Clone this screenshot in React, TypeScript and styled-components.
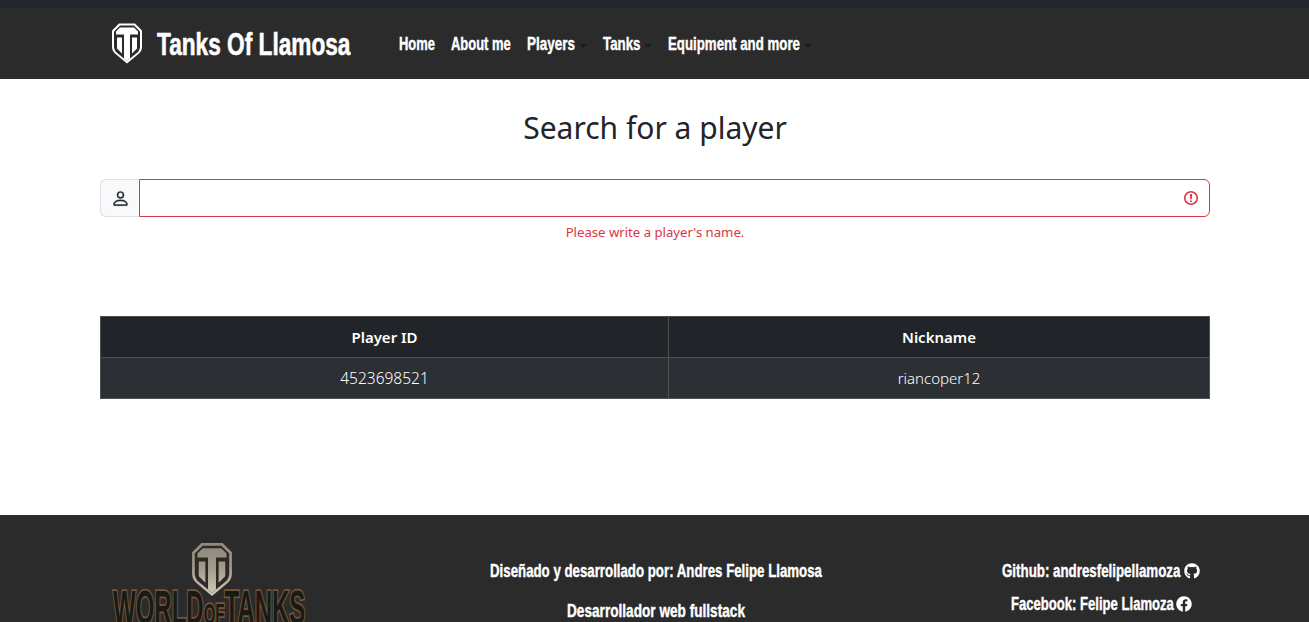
import type { ReactNode } from "react";
import { FaFacebook, FaGithub } from "react-icons/fa";
import { BsPerson } from "react-icons/bs";
import styled, { createGlobalStyle } from "styled-components";

const GlobalStyle = createGlobalStyle`
  html, body {
    margin: 0;
    padding: 0;
    background: #fff;
    overflow: hidden;
  }
  * {
    box-sizing: border-box;
  }
`;

const Page = styled.div`
  height: 100vh;
  overflow: hidden;
  font-family: "Noto Sans", "Open Sans", sans-serif;
  color: #212529;
`;

// the condensed display face isn't installed, so squeeze Liberation Sans Bold
const NarrowBox = styled.span<{ $w: number }>`
  display: inline-block;
  flex: none;
  width: ${(p) => p.$w}px;
  font-family: "Liberation Sans", Arial, sans-serif;
  font-weight: 700;
  white-space: nowrap;
`;

const NarrowText = styled.span<{ $s: number }>`
  display: inline-block;
  transform-origin: left center;
  transform: scaleX(${(p) => p.$s});
`;

function Narrow({ w, s = 0.72, children }: { w: number; s?: number; children: ReactNode }) {
  return (
    <NarrowBox $w={w}>
      <NarrowText $s={s}>{children}</NarrowText>
    </NarrowBox>
  );
}

const Navbar = styled.nav`
  height: 79px;
  background: linear-gradient(#23272b 0, #23272b 7px, #2b2b2b 8px);
  display: flex;
  align-items: center;
  padding: 10px 0 0 112px;
`;

const Brand = styled.a`
  display: flex;
  align-items: center;
  gap: 15px;
  width: 287px;
  color: #fff;
  font-size: 32px;
  -webkit-text-stroke: 0.6px #fff;
`;

const BrandLogo = styled.svg`
  flex: none;
  margin-top: -3px;
`;

const NavLinks = styled.div`
  display: flex;
  align-items: center;
  gap: 16px;
`;

const NavLink = styled.a`
  display: flex;
  align-items: center;
  color: #fff;
  font-size: 18px;
  -webkit-text-stroke: 0.4px #fff;
`;

const Caret = styled.span`
  width: 0;
  height: 0;
  margin: 3px 0 0 4px;
  border-top: 4px solid #1a1c1e;
  border-left: 4px solid transparent;
  border-right: 4px solid transparent;
`;

const Main = styled.main`
  height: 436px;
  padding: 0 99px 0 100px;
`;

const Title = styled.h1`
  margin: 0;
  padding-top: 29px;
  height: 100px;
  text-align: center;
  font-weight: 400;
  font-size: 30px;
  line-height: 40px;
`;

const InputGroup = styled.div`
  display: flex;
  height: 38px;
`;

const Addon = styled.span`
  width: 39px;
  display: flex;
  align-items: center;
  justify-content: center;
  background: #f8f9fa;
  border: 1px solid #dee2e6;
  border-right: 0;
  border-radius: 6px 0 0 6px;
`;

const PersonIcon = styled(BsPerson)`
  stroke: currentColor;
  stroke-width: 0.35px;
`;

const InputBox = styled.div`
  flex: 1;
  display: flex;
  align-items: center;
  justify-content: flex-end;
  padding-right: 10px;
  border: 1px solid #dc3545;
  border-radius: 0 6px 6px 0;
`;

const ErrorText = styled.div`
  margin-top: 5px;
  height: 20px;
  line-height: 20px;
  text-align: center;
  font-size: 13.15px;
  color: #dc3545;
`;

const Table = styled.table`
  width: 100%;
  margin-top: 74px;
  border-collapse: collapse;
  table-layout: fixed;
  color: #fff;
`;

const HeadCell = styled.th`
  height: 41px;
  padding: 0;
  background: #212529;
  border: 1px solid #4d5154;
  font-weight: 600;
  font-size: 15px;
`;

const Cell = styled.td<{ $size: number }>`
  height: 41px;
  padding: 0;
  background: #2c3034;
  border: 1px solid #4d5154;
  text-align: center;
  font-weight: 300;
  font-size: ${(p) => p.$size}px;
`;

const Footer = styled.footer`
  height: 240px;
  background: #2b2b2b;
  padding: 28px 100px 0;
  display: grid;
  grid-template-columns: 220px 1fr 220px;
  color: #fff;
  font-size: 18px;
`;

const LogoCol = styled.div`
  display: flex;
  flex-direction: column;
  align-items: center;
`;

const ShieldWrap = styled.div`
  height: 53px;
  margin-left: 4px;
`;

const WotText = styled.div`
  margin-top: -15px;
  font-size: 48px;
  line-height: 50px;
  color: #191a15;
  paint-order: stroke fill;
  -webkit-text-stroke: 3.5px #75563a;
`;

const WotSmall = styled.span`
  font-size: 30px;
`;

const TextCol = styled.div<{ $shift: number }>`
  padding-top: 18px;
  padding-left: ${(p) => p.$shift}px;
`;

const FooterLine = styled.p<{ $gap: number }>`
  display: flex;
  align-items: center;
  justify-content: center;
  gap: 3px;
  height: 20px;
  margin: 0 0 ${(p) => p.$gap}px;
  -webkit-text-stroke: 0.4px #fff;
`;

const shieldOuter = "M8 1h16l7 7v16c0 3-1 5-3 7L16 41 4 31c-2-2-3-4-3-7V8z";
const shieldInner = "M9 3h14l6 6v15c0 2-1 4-2 5.500L16 38.500 5 29.500c-1-1.500-2-3.500-2-5.500V9z";
const shieldMark = "M9 5h14l4 4v3H5V9zM13 12h6v24l-3 2.500-3-2.500zM6 15h5v16l-5-5zM21 15h5v11l-5 5z";

function TankLogo() {
  return (
    <BrandLogo width="30" height="41" viewBox="1 1 30 40">
      <path d={shieldOuter} fill="#fff" />
      <path d={shieldInner} fill="#2b2b2b" />
      <path d={shieldMark} fill="#fff" />
    </BrandLogo>
  );
}

function FooterShield() {
  return (
    <svg width="40" height="53" viewBox="1 1 30 40">
      <defs>
        <linearGradient id="steel" x1="0" y1="0" x2="0" y2="1">
          <stop offset="0" stopColor="#8f8a7e" />
          <stop offset="0.45" stopColor="#a39c8c" />
          <stop offset="1" stopColor="#cfc6b2" />
        </linearGradient>
      </defs>
      <path d={shieldOuter} fill="url(#steel)" />
      <path d={shieldInner} fill="#2d2925" />
      <path d={shieldMark} fill="url(#steel)" />
    </svg>
  );
}

function InvalidIcon() {
  return (
    <svg width="16" height="16" viewBox="0 0 12 12" fill="none" stroke="#dc3545" strokeWidth="1.2">
      <circle cx="6" cy="6" r="4.7" />
      <path strokeLinejoin="round" d="M5.8 3.6h.4L6 6.5z" />
      <circle cx="6" cy="8.4" r=".7" fill="#dc3545" stroke="none" />
    </svg>
  );
}

export default function App() {
  return (
    <Page>
      <GlobalStyle />
      <Navbar>
        <Brand>
          <TankLogo />
          <Narrow w={193} s={0.708}>
            Tanks Of Llamosa
          </Narrow>
        </Brand>
        <NavLinks>
          <NavLink>
            <Narrow w={36}>Home</Narrow>
          </NavLink>
          <NavLink>
            <Narrow w={60}>About me</Narrow>
          </NavLink>
          <NavLink>
            <Narrow w={48} s={0.75}>
              Players
            </Narrow>
            <Caret />
          </NavLink>
          <NavLink>
            <Narrow w={37} s={0.74}>
              Tanks
            </Narrow>
            <Caret />
          </NavLink>
          <NavLink>
            <Narrow w={132} s={0.737}>
              Equipment and more
            </Narrow>
            <Caret />
          </NavLink>
        </NavLinks>
      </Navbar>
      <Main>
        <Title>Search for a player</Title>
        <InputGroup>
          <Addon>
            <PersonIcon size={19} />
          </Addon>
          <InputBox>
            <InvalidIcon />
          </InputBox>
        </InputGroup>
        <ErrorText>Please write a player's name.</ErrorText>
        <Table>
          <colgroup>
            <col style={{ width: "568px" }} />
            <col />
          </colgroup>
          <thead>
            <tr>
              <HeadCell>Player ID</HeadCell>
              <HeadCell>Nickname</HeadCell>
            </tr>
          </thead>
          <tbody>
            <tr>
              <Cell $size={15.5}>4523698521</Cell>
              <Cell $size={15}>riancoper12</Cell>
            </tr>
          </tbody>
        </Table>
      </Main>
      <Footer>
        <LogoCol>
          <ShieldWrap>
            <FooterShield />
          </ShieldWrap>
          <WotText>
            <Narrow w={194} s={0.5}>
              WORLD<WotSmall>OF</WotSmall>TANKS
            </Narrow>
          </WotText>
        </LogoCol>
        <TextCol $shift={2}>
          <FooterLine $gap={20}>
            <Narrow w={332} s={0.737}>
              Diseñado y desarrollado por: Andres Felipe Llamosa
            </Narrow>
          </FooterLine>
          <FooterLine $gap={0}>
            <Narrow w={178} s={0.757}>
              Desarrollador web fullstack
            </Narrow>
          </FooterLine>
        </TextCol>
        <TextCol $shift={4}>
          <FooterLine $gap={13}>
            <Narrow w={179} s={0.74}>
              Github: andresfelipellamoza
            </Narrow>
            <FaGithub size={16} />
          </FooterLine>
          <FooterLine $gap={0}>
            <Narrow w={162} s={0.727}>
              Facebook: Felipe Llamoza
            </Narrow>
            <FaFacebook size={16} />
          </FooterLine>
        </TextCol>
      </Footer>
    </Page>
  );
}
